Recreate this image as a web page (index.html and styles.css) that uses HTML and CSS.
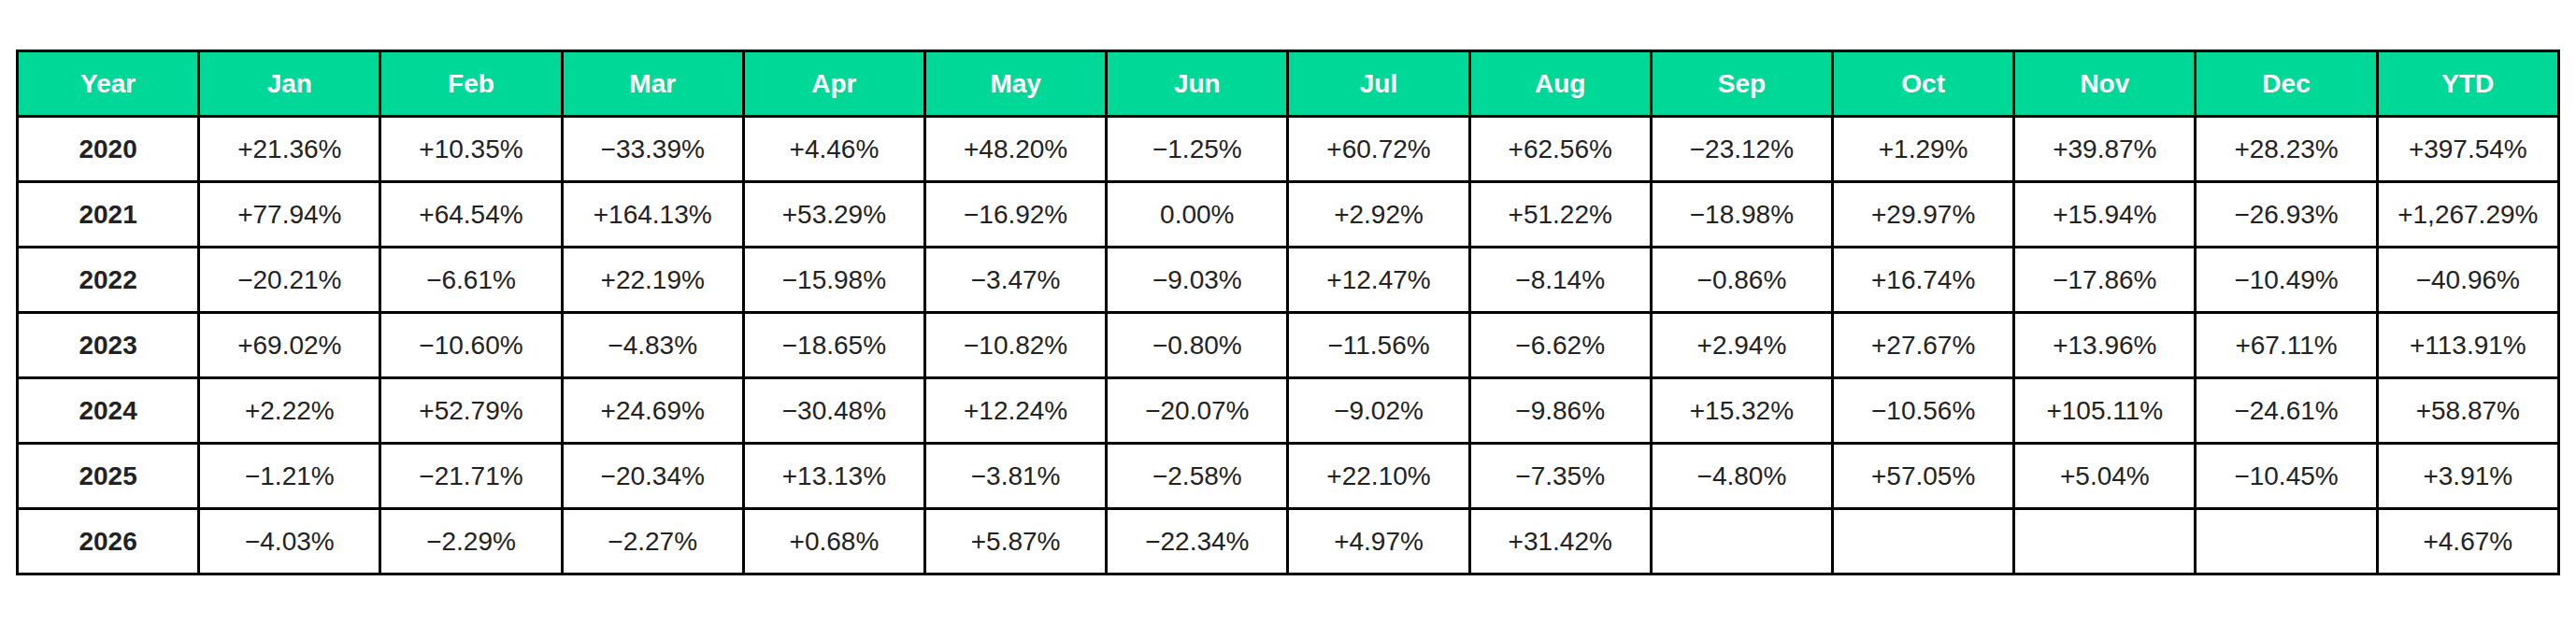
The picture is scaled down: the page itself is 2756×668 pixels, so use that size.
FILE: index.html
```html
<!DOCTYPE html>
<html>
<head>
<meta charset="utf-8">
<link rel="stylesheet" href="styles.css">
</head>
<body>
<div class="wrap">
<table class="returns">
<thead>
<tr><th>Year</th><th>Jan</th><th>Feb</th><th>Mar</th><th>Apr</th><th>May</th><th>Jun</th><th>Jul</th><th>Aug</th><th>Sep</th><th>Oct</th><th>Nov</th><th>Dec</th><th>YTD</th></tr>
</thead>
<tbody>
<tr><td class="yr">2020</td><td>+21.36%</td><td>+10.35%</td><td>−33.39%</td><td>+4.46%</td><td>+48.20%</td><td>−1.25%</td><td>+60.72%</td><td>+62.56%</td><td>−23.12%</td><td>+1.29%</td><td>+39.87%</td><td>+28.23%</td><td>+397.54%</td></tr>
<tr><td class="yr">2021</td><td>+77.94%</td><td>+64.54%</td><td>+164.13%</td><td>+53.29%</td><td>−16.92%</td><td>0.00%</td><td>+2.92%</td><td>+51.22%</td><td>−18.98%</td><td>+29.97%</td><td>+15.94%</td><td>−26.93%</td><td>+1,267.29%</td></tr>
<tr><td class="yr">2022</td><td>−20.21%</td><td>−6.61%</td><td>+22.19%</td><td>−15.98%</td><td>−3.47%</td><td>−9.03%</td><td>+12.47%</td><td>−8.14%</td><td>−0.86%</td><td>+16.74%</td><td>−17.86%</td><td>−10.49%</td><td>−40.96%</td></tr>
<tr><td class="yr">2023</td><td>+69.02%</td><td>−10.60%</td><td>−4.83%</td><td>−18.65%</td><td>−10.82%</td><td>−0.80%</td><td>−11.56%</td><td>−6.62%</td><td>+2.94%</td><td>+27.67%</td><td>+13.96%</td><td>+67.11%</td><td>+113.91%</td></tr>
<tr><td class="yr">2024</td><td>+2.22%</td><td>+52.79%</td><td>+24.69%</td><td>−30.48%</td><td>+12.24%</td><td>−20.07%</td><td>−9.02%</td><td>−9.86%</td><td>+15.32%</td><td>−10.56%</td><td>+105.11%</td><td>−24.61%</td><td>+58.87%</td></tr>
<tr><td class="yr">2025</td><td>−1.21%</td><td>−21.71%</td><td>−20.34%</td><td>+13.13%</td><td>−3.81%</td><td>−2.58%</td><td>+22.10%</td><td>−7.35%</td><td>−4.80%</td><td>+57.05%</td><td>+5.04%</td><td>−10.45%</td><td>+3.91%</td></tr>
<tr><td class="yr">2026</td><td>−4.03%</td><td>−2.29%</td><td>−2.27%</td><td>+0.68%</td><td>+5.87%</td><td>−22.34%</td><td>+4.97%</td><td>+31.42%</td><td></td><td></td><td></td><td></td><td>+4.67%</td></tr>
</tbody>
</table>
</div>
</body>
</html>
```

FILE: styles.css
```css
html, body {
  margin: 0;
  padding: 0;
  background: #fff;
}
.wrap {
  padding: 53px 17px 0 17px;
}
.returns {
  width: 2722px;
  table-layout: fixed;
  border-collapse: separate;
  border-spacing: 0;
  border-left: 3px solid #000;
  border-top: 3px solid #000;
  font-family: "Liberation Sans", Arial, sans-serif;
  font-size: 28px;
}
.returns th,
.returns td {
  height: 67px;
  padding: 0;
  border-right: 3px solid #000;
  border-bottom: 3px solid #000;
  text-align: center;
  vertical-align: middle;
  box-sizing: content-box;
}
.returns th {
  background: #00d898;
  color: #fff;
  font-weight: bold;
}
.returns td {
  color: #222;
  font-weight: normal;
}
.returns td.yr {
  font-weight: bold;
}
```
